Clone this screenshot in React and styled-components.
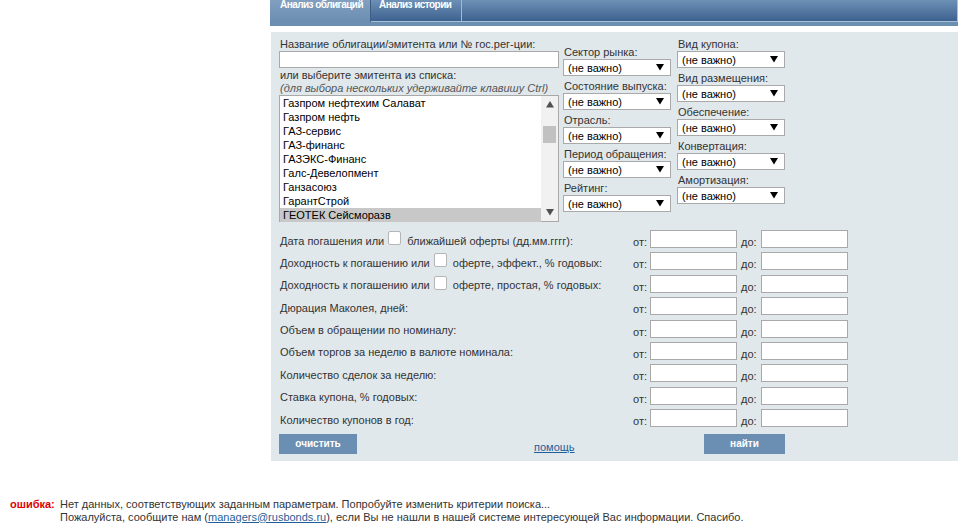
import React from "react"
import styled, { createGlobalStyle } from "styled-components"

const GlobalStyle = createGlobalStyle`
  body {
    margin: 0;
    background: #fff;
    font-family: "Liberation Sans", Arial, sans-serif;
    font-size: 11px;
    color: #333;
  }
`

const Page = styled.div`
  padding-left: 270px;
`

const Wrap = styled.div`
  width: 688px;
`

const TabBar = styled.div`
  display: flex;
  height: 21px;
  background: linear-gradient(#6d90b6, #3e6290);
  border-bottom: 1px solid #a8c0d8;
  border-right: 1px solid #a8c0d8;
`

const Tab = styled.div`
  display: flex;
  width: ${p => p.w}px;
  padding-left: ${p => p.pad}px;
  box-sizing: border-box;
  color: #fff;
  font-weight: bold;
  font-size: 10px;
  letter-spacing: -0.55px;
  line-height: 12px;
  white-space: nowrap;
  background: ${p => (p.active ? "linear-gradient(#829fbf, #6b8eb1)" : "transparent")};
  border-right: 1px solid ${p => (p.active ? "#3c5d86" : "#9fb9d3")};
  height: ${p => (p.active ? "22px" : "21px")};
  span {
    margin-top: -1px;
  }
`

const Strip = styled.div`
  height: 4px;
  background: #6b8fb1;
  margin-bottom: 6px;
`

const Panel = styled.div`
  background: #e1e8ec;
  padding: 6px 8px 7px 8px;
  margin-left: 1px;
  width: 687px;
  box-sizing: border-box;
`

const Top = styled.div`
  display: flex;
  gap: 4px;
`

const LeftCol = styled.div`
  width: 280px;
  display: flex;
  flex-direction: column;
`

const Label = styled.div`
  line-height: 13px;
  padding-left: 1px;
  white-space: nowrap;
  font-style: ${p => (p.italic ? "italic" : "normal")};
  color: ${p => (p.italic ? "#555" : "#333")};
`

const TextInput = styled.div`
  height: 17px;
  box-sizing: border-box;
  border: 1px solid #a9a9a9;
  background: #fff;
  margin-bottom: 1px;
`

const ListBox = styled.div`
  display: flex;
  height: 127px;
  box-sizing: border-box;
  border: 1px solid #a9a9a9;
  background: #fff;
`

const Items = styled.div`
  flex: 1;
  display: flex;
  flex-direction: column;
`

const Item = styled.div`
  height: 14px;
  line-height: 14px;
  padding-left: 3px;
  color: #000;
  font-size: 11px;
  background: ${p => (p.selected ? "#c8c8c8" : "transparent")};
`

const Scrollbar = styled.div`
  width: 17px;
  background: #f1f1f1;
  display: flex;
  flex-direction: column;
  align-items: center;
`

const ScrollArrow = styled.div`
  height: 17px;
  display: flex;
  align-items: center;
  justify-content: center;
`

const Track = styled.div`
  flex: 1;
  width: 100%;
  display: flex;
  flex-direction: column;
  align-items: center;
`

const Thumb = styled.div`
  margin-top: 13px;
  width: 13px;
  height: 17px;
  background: #c1c1c1;
`

const SelCol = styled.div`
  display: flex;
  flex-direction: column;
  gap: 4px;
  padding-top: ${p => p.top}px;
  width: ${p => p.w}px;
`

const Field = styled.div`
  display: flex;
  flex-direction: column;
`

const Select = styled.div`
  width: 108px;
  height: 17px;
  box-sizing: border-box;
  border: 1px solid #a9a9a9;
  background: #fff;
  display: flex;
  align-items: center;
  justify-content: space-between;
  padding: 0 6px 0 4px;
  color: #000;
  font-size: 11px;
`

const Rows = styled.div`
  margin-top: 8px;
  display: flex;
  flex-direction: column;
`

const Row = styled.div`
  display: flex;
  align-items: flex-start;
  height: 22.4px;
`

const RowLabel = styled.div`
  width: 354px;
  padding-left: 1px;
  box-sizing: border-box;
  display: flex;
  align-items: center;
  height: 18px;
  padding-top: 3px;
  white-space: nowrap;
`

const Check = styled.span`
  display: inline-block;
  width: 11px;
  height: 12px;
  border: 1px solid #b5b5b5;
  border-radius: 2px;
  background: #fff;
  margin: 0 6px 0 4px;
  align-self: flex-start;
  margin-top: -2px;
`

const Unit = styled.div`
  width: ${p => p.w}px;
  height: 18px;
  line-height: 18px;
  padding-top: 3px;
  box-sizing: border-box;
`

const NumInput = styled.div`
  width: 87px;
  height: 18px;
  box-sizing: border-box;
  border: 1px solid #a9a9a9;
  background: #fff;
  margin-right: ${p => p.mr || 0}px;
`

const Buttons = styled.div`
  display: grid;
  grid-template-columns: 255px 170px auto;
  align-items: center;
  margin-top: 2px;
`

const Button = styled.div`
  width: ${p => p.w}px;
  height: 20px;
  background: #6b8fb3;
  color: #fff;
  font-weight: bold;
  font-size: 10px;
  display: flex;
  align-items: center;
  justify-content: center;
`

const Link = styled.a`
  color: #1f5f99;
  text-decoration: underline;
  font-size: 11px;
  padding-top: 6px;
`

const ErrorBlock = styled.div`
  display: flex;
  margin-top: 37px;
  padding-left: 10px;
  line-height: 13px;
`

const ErrorTag = styled.div`
  width: 50px;
  color: #e00000;
  font-weight: bold;
`

const ErrorText = styled.div`
  color: #333;
  a {
    color: #1f5f99;
    text-decoration: underline;
  }
`

const Arrow = ({ size = 7, up, color = "#000" }) => (
  <svg width={size} height={size * 0.8} viewBox="0 0 10 8">
    <path d={up ? "M0 8 L5 0 L10 8 Z" : "M0 0 L10 0 L5 8 Z"} fill={color} />
  </svg>
)

const issuers = [
  "Газпром нефтехим Салават",
  "Газпром нефть",
  "ГАЗ-сервис",
  "ГАЗ-финанс",
  "ГАЗЭКС-Финанс",
  "Галс-Девелопмент",
  "Ганзасоюз",
  "ГарантСтрой",
  "ГЕОТЕК Сейсморазв",
]

const col2 = ["Сектор рынка:", "Состояние выпуска:", "Отрасль:", "Период обращения:", "Рейтинг:"]
const col3 = ["Вид купона:", "Вид размещения:", "Обеспечение:", "Конвертация:", "Амортизация:"]

const ranges = [
  { a: "Дата погашения или", b: "ближайшей оферты (дд.мм.гггг):" },
  { a: "Доходность к погашению или", b: "оферте, эффект., % годовых:" },
  { a: "Доходность к погашению или", b: "оферте, простая, % годовых:" },
  { a: "Дюрация Маколея, дней:" },
  { a: "Объем в обращении по номиналу:" },
  { a: "Объем торгов за неделю в валюте номинала:" },
  { a: "Количество сделок за неделю:" },
  { a: "Ставка купона, % годовых:" },
  { a: "Количество купонов в год:" },
]

const SelectField = ({ label }) => (
  <Field>
    <Label>{label}</Label>
    <Select>
      <span>(не важно)</span>
      <Arrow size={8} />
    </Select>
  </Field>
)

export default function App() {
  return (
    <>
      <GlobalStyle />
      <Page>
        <Wrap>
          <TabBar>
            <Tab active w={101} pad={10}>
              <span>Анализ облигаций</span>
            </Tab>
            <Tab w={91} pad={8}>
              <span>Анализ истории</span>
            </Tab>
          </TabBar>
          <Strip />
          <Panel>
            <Top>
              <LeftCol>
                <Label>Название облигации/эмитента или № гос.рег-ции:</Label>
                <TextInput />
                <Label>или выберите эмитента из списка:</Label>
                <Label italic>(для выбора нескольких удерживайте клавишу Ctrl)</Label>
                <ListBox>
                  <Items>
                    {issuers.map((name, i) => (
                      <Item key={name} selected={i === issuers.length - 1}>
                        {name}
                      </Item>
                    ))}
                  </Items>
                  <Scrollbar>
                    <ScrollArrow>
                      <Arrow up size={8} color="#505050" />
                    </ScrollArrow>
                    <Track>
                      <Thumb />
                    </Track>
                    <ScrollArrow>
                      <Arrow size={8} color="#505050" />
                    </ScrollArrow>
                  </Scrollbar>
                </ListBox>
              </LeftCol>
              <SelCol top={8} w={110}>
                {col2.map(l => (
                  <SelectField key={l} label={l} />
                ))}
              </SelCol>
              <SelCol top={0} w={120}>
                {col3.map(l => (
                  <SelectField key={l} label={l} />
                ))}
              </SelCol>
            </Top>
            <Rows>
              {ranges.map((r, i) => (
                <Row key={i}>
                  <RowLabel>
                    {r.a}
                    {r.b && (
                      <>
                        <Check />
                        {r.b}
                      </>
                    )}
                  </RowLabel>
                  <Unit w={17}>от:</Unit>
                  <NumInput mr={4} />
                  <Unit w={20}>до:</Unit>
                  <NumInput />
                </Row>
              ))}
            </Rows>
            <Buttons>
              <Button w={78}>очистить</Button>
              <Link href="#">помощь</Link>
              <Button w={81}>найти</Button>
            </Buttons>
          </Panel>
        </Wrap>
      </Page>
      <ErrorBlock>
        <ErrorTag>ошибка:</ErrorTag>
        <ErrorText>
          Нет данных, соответствующих заданным параметрам. Попробуйте изменить критерии поиска...
          <br />
          Пожалуйста, сообщите нам (<a href="#">managers@rusbonds.ru</a>), если Вы не нашли в нашей
          системе интересующей Вас информации. Спасибо.
        </ErrorText>
      </ErrorBlock>
    </>
  )
}
